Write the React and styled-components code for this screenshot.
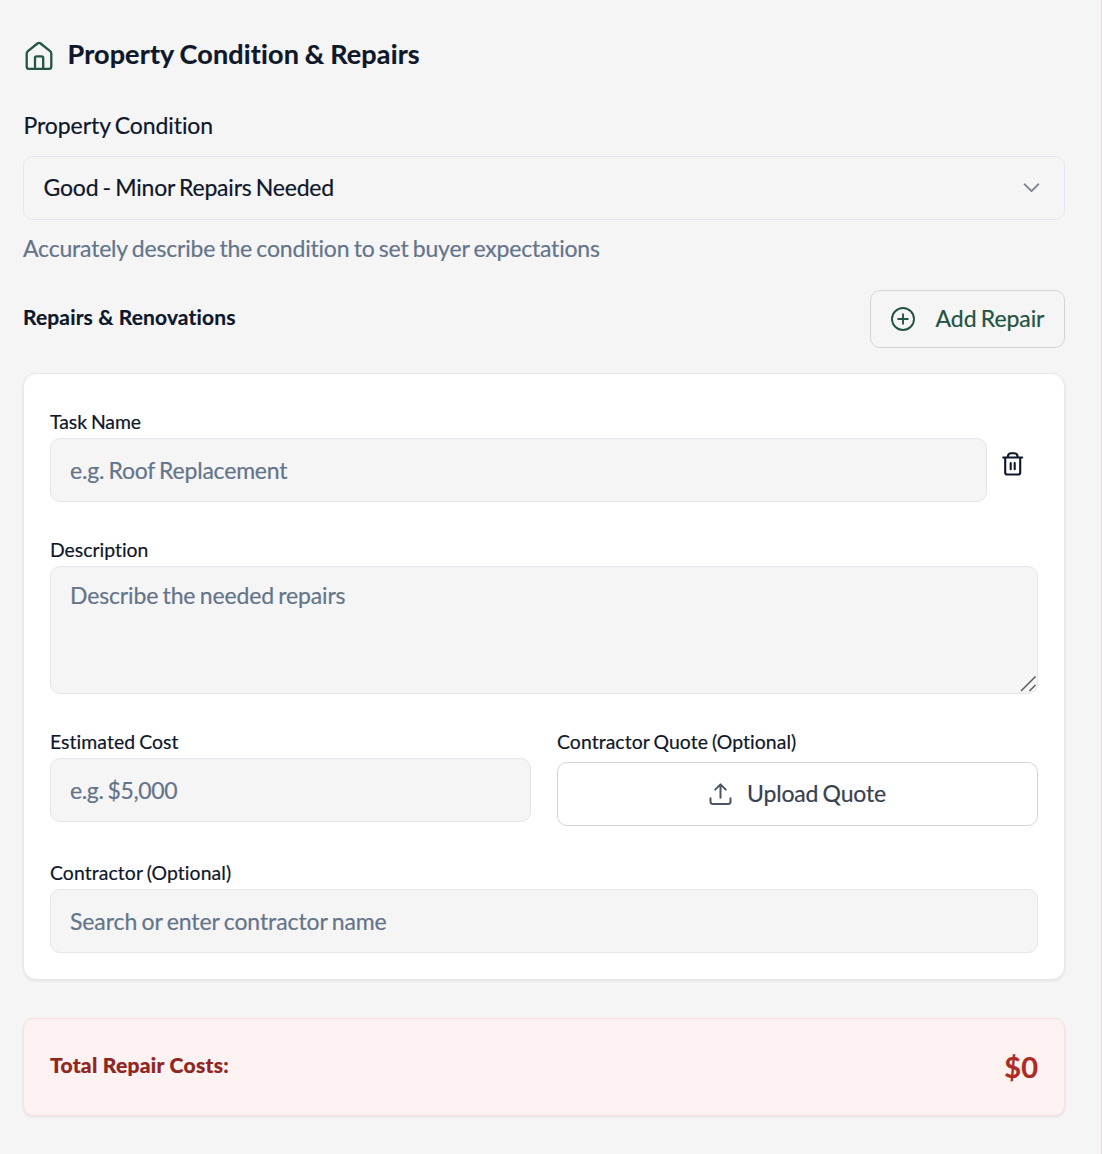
import React from "react";
import styled, { createGlobalStyle } from "styled-components";

const GlobalStyle = createGlobalStyle`
  *, *::before, *::after { box-sizing: border-box; }
  body { margin: 0; background: #f5f5f5; }
`;

const Page = styled.main`
  min-height: 1154px;
  padding: 36px 36px 38px 23px;
  border-right: 1px solid #e6d8dc;
  background: #f5f5f5;
  color: #0f172a;
  font-family: Lato, "Liberation Sans", sans-serif;
  font-size: 23px;
  font-variant-ligatures: none;
  letter-spacing: -0.19px;
  word-spacing: -1.4px;
  -webkit-text-stroke: 0.2px currentColor;

  button, input, textarea {
    font: inherit;
    font-variant-ligatures: none;
    word-spacing: inherit;
  }
`;

const Header = styled.header`
  display: flex;
  align-items: center;
  gap: 12.5px;
  height: 38px;
  margin-bottom: 35px;
`;

const Title = styled.h2`
  margin: 0;
  padding-bottom: 3px;
  font-size: 27px;
  line-height: 36px;
  font-weight: 700;
  letter-spacing: 0.15px;
  word-spacing: -1px;
  white-space: nowrap;
`;

const SubTitle = styled.h3`
  margin: 0;
  font-size: 21px;
  line-height: 28px;
  font-weight: ${(p) => p.$weight || 700};
  letter-spacing: ${(p) => p.$spacing || "0"};
  word-spacing: 0;
  white-space: nowrap;
`;

const FieldLabel = styled.label`
  display: block;
  height: 32px;
  margin-bottom: 15px;
  padding-left: 0.5px;
  line-height: 32px;
  letter-spacing: -0.08px;
`;

const SelectButton = styled.button`
  display: flex;
  align-items: center;
  justify-content: space-between;
  width: 100%;
  height: 64px;
  padding: 0 24px 2px 19.5px;
  border: 1px solid #e2e6ee;
  border-radius: 10px;
  background: transparent;
  color: inherit;
  letter-spacing: -0.2px;
`;

const Hint = styled.p`
  margin: 12px 0 26px;
  line-height: 32px;
  color: #64748b;
`;

const RepairsHeader = styled.div`
  display: flex;
  align-items: center;
  justify-content: space-between;
  height: 58px;
  margin-bottom: 25px;

  ${SubTitle} { padding-bottom: 5px; }
`;

const OutlineButton = styled.button`
  display: flex;
  align-items: center;
  justify-content: center;
  gap: ${(p) => p.$gap};
  width: ${(p) => p.$width};
  height: ${(p) => p.$height};
  padding: 0;
  border: 1px solid #d1d5db;
  border-radius: 10px;
  background: ${(p) => p.$background || "transparent"};
  color: ${(p) => p.$color};
  letter-spacing: ${(p) => p.$spacing};
  white-space: nowrap;

  span { padding-bottom: 2px; }
  svg { color: ${(p) => p.$iconColor || "inherit"}; }
`;

const Card = styled.section`
  display: flex;
  flex-direction: column;
  height: 607px;
  padding: 35px 26px 26px;
  border: 1px solid #e5e7eb;
  border-radius: 13px;
  background: #fff;
  box-shadow: 0 1px 3px rgba(0, 0, 0, 0.08);
`;

const Field = styled.div`
  flex: ${(p) => p.$flex || "none"};
  min-width: 0;
`;

const SmallLabel = styled.label`
  display: block;
  height: 26px;
  margin-bottom: ${(p) => p.$gap || "3px"};
  font-size: 19.4px;
  line-height: 26px;
  letter-spacing: ${(p) => p.$spacing || "0.07px"};
  word-spacing: -1px;
  white-space: nowrap;
`;

const Input = styled.input`
  display: block;
  width: 100%;
  height: 64px;
  padding: 0 19px;
  border: 1px solid #e2e6ee;
  border-radius: 10px;
  outline: none;
  background: #f5f5f5;
  color: #0f172a;
  letter-spacing: ${(p) => p.$spacing};
  &::placeholder { color: #64748b; opacity: 1; }
`;

const TextAreaWrap = styled.div`
  position: relative;
  height: 128px;
`;

const TextArea = styled.textarea`
  display: block;
  width: 100%;
  height: 128px;
  padding: 12px 19px;
  border: 1px solid #e2e6ee;
  border-radius: 10px;
  outline: none;
  resize: none;
  background: #f5f5f5;
  color: #0f172a;
  letter-spacing: -0.14px;
  && { line-height: 32px; }
  &::placeholder { color: #64748b; opacity: 1; }
`;

const ResizeGrip = styled.svg`
  position: absolute;
  right: 0;
  bottom: 1px;
`;

const TaskRow = styled.div`
  display: flex;
  align-items: flex-start;
  margin-bottom: 35px;
`;

const DeleteButton = styled.button`
  display: flex;
  align-items: center;
  justify-content: center;
  width: 51px;
  height: 51px;
  margin-top: 29px;
  padding: 0;
  border: 0;
  background: transparent;
  color: #0f172a;
`;

const CostRow = styled.div`
  display: flex;
  gap: 26px;
  margin: 35px 0 34px;
`;

const TotalBar = styled.section`
  display: flex;
  align-items: center;
  justify-content: space-between;
  height: 98px;
  margin-top: 38px;
  padding: 0 26px;
  border: 1px solid #fbdfe0;
  border-radius: 10px;
  background: #fcf2f1;
  box-shadow: 0 1px 3px rgba(0, 0, 0, 0.08);
  color: #8f2622;

  ${SubTitle} { padding-bottom: 5px; }
`;

const Amount = styled.strong`
  color: #ac2c25;
  font-size: 29px;
  line-height: 36px;
  font-weight: 700;
  letter-spacing: 0;
`;

function Icon({ width, height, stroke = 2, children }) {
  return (
    <svg width={width} height={height} viewBox={`0 0 ${width} ${height}`} fill="none"
      stroke="currentColor" strokeWidth={stroke} strokeLinecap="round" strokeLinejoin="round" aria-hidden="true">
      {children}
    </svg>
  );
}

const HouseMark = styled.span`
  display: flex;
  flex: none;
  padding-top: 2px;
  color: #245443;
`;

const Chevron = styled.span`
  display: flex;
  padding-top: 1px;
  color: #7d838d;
`;

export default function App() {
  return (
    <>
      <GlobalStyle />
      <Page>
        <Header>
          <HouseMark>
            <Icon width={32} height={32} stroke={2.3}>
              <path d="M3.7 13.7Q3.7 12.1 4.9 11.1L14.4 3.5Q16 2.3 17.6 3.5L27.1 11.1Q28.3 12.1 28.3 13.7V26.4Q28.3 28.8 25.9 28.8H6.1Q3.7 28.8 3.7 26.4Z" />
              <path d="M12 28V18Q12 16.3 13.7 16.3H18.5Q20.2 16.3 20.2 18V28" />
            </Icon>
          </HouseMark>
          <Title>Property Condition &amp; Repairs</Title>
        </Header>

        <FieldLabel>Property Condition</FieldLabel>
        <SelectButton type="button">
          <span>Good - Minor Repairs Needed</span>
          <Chevron>
            <Icon width={17} height={10}><path d="M1.7 1.4L8.5 8.1L15.3 1.4" /></Icon>
          </Chevron>
        </SelectButton>
        <Hint>Accurately describe the condition to set buyer expectations</Hint>

        <RepairsHeader>
          <SubTitle $spacing="0.14px">Repairs &amp; Renovations</SubTitle>
          <OutlineButton type="button" $width="195px" $height="58px" $gap="20px" $color="#245443" $spacing="-0.08px">
            <Icon width={25} height={25} stroke={1.9}>
              <circle cx="12" cy="12" r="11" />
              <path d="M7.2 12H16.8M12 7.2V16.8" />
            </Icon>
            <span>Add Repair</span>
          </OutlineButton>
        </RepairsHeader>

        <Card>
          <TaskRow>
            <Field $flex="1">
              <SmallLabel htmlFor="task" $spacing="-0.04px">Task Name</SmallLabel>
              <Input id="task" placeholder="e.g. Roof Replacement" $spacing="-0.2px" />
            </Field>
            <DeleteButton type="button" aria-label="Delete repair">
              <Icon width={22} height={24} stroke={2.1}>
                <path d="M1.2 5.5H20.2M3.2 5.8V20.4Q3.2 22.5 5.3 22.5H16.1Q18.2 22.5 18.2 20.4V5.8M5.9 5.3V4.6Q5.9 1.3 9.2 1.3H12.2Q15.5 1.3 15.5 4.6V5.3M8.7 11V17.3M12.7 11V17.3" />
              </Icon>
            </DeleteButton>
          </TaskRow>

          <Field>
            <SmallLabel htmlFor="description" $spacing="0">Description</SmallLabel>
            <TextAreaWrap>
              <TextArea id="description" placeholder="Describe the needed repairs" />
              <ResizeGrip width="18" height="18" fill="none" stroke="#5c5c5c" strokeWidth="1.5">
                <path d="M1 16L15.5 1.5M9.5 16L15.5 10" />
              </ResizeGrip>
            </TextAreaWrap>
          </Field>

          <CostRow>
            <Field $flex="1">
              <SmallLabel htmlFor="cost">Estimated Cost</SmallLabel>
              <Input id="cost" placeholder="e.g. $5,000" $spacing="-0.38px" />
            </Field>
            <Field $flex="1">
              <SmallLabel as="div" $gap="7px">Contractor Quote (Optional)</SmallLabel>
              <OutlineButton type="button" $width="100%" $height="64px" $gap="15px" $color="#374151" $iconColor="#4b5563" $background="#fff" $spacing="-0.17px">
                <Icon width={23} height={23} stroke={2}>
                  <path d="M11.5 14.8V1.8M6.2 6.6L11.5 1.4L16.8 6.6M1.5 15.2V18.4Q1.5 20.9 4 20.9H19Q21.5 20.9 21.5 18.4V15.2" />
                </Icon>
                <span>Upload Quote</span>
              </OutlineButton>
            </Field>
          </CostRow>

          <Field>
            <SmallLabel htmlFor="contractor" $spacing="0.09px">Contractor (Optional)</SmallLabel>
            <Input id="contractor" placeholder="Search or enter contractor name" $spacing="-0.09px" />
          </Field>
        </Card>

        <TotalBar>
          <SubTitle as="div" $weight={900} $spacing="0.28px">Total Repair Costs:</SubTitle>
          <Amount>$0</Amount>
        </TotalBar>
      </Page>
    </>
  );
}
